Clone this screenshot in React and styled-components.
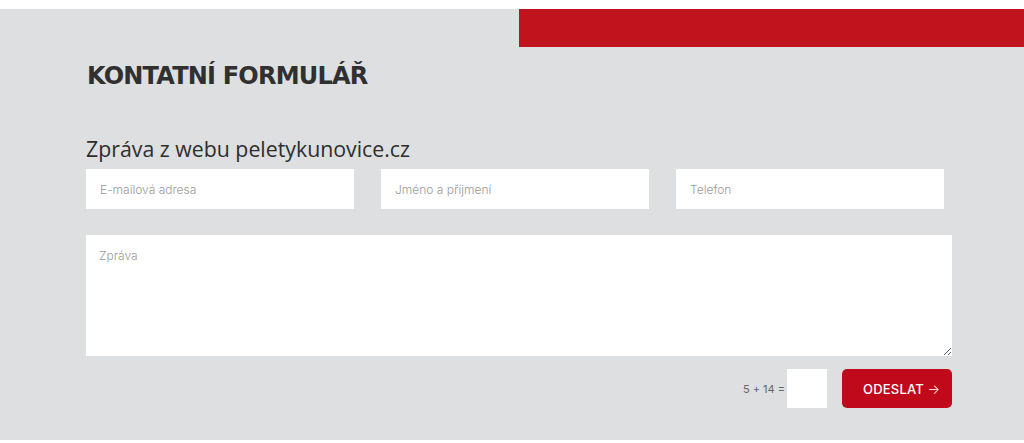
import React from "react";
import styled, { createGlobalStyle } from "styled-components";

const GlobalStyle = createGlobalStyle`
  html, body {
    margin: 0;
    padding: 0;
    background: #ffffff;
  }
  * {
    box-sizing: border-box;
  }
`;

const Section = styled.section`
  position: relative;
  margin-top: 9px;
  height: 431px;
  background: #dddfe0;
  padding: 51px 0 0 86px;
  font-family: "Open Sans", sans-serif;
`;

const RedBar = styled.div`
  position: absolute;
  top: 0;
  right: 0;
  width: 505px;
  height: 38px;
  background: #c1131d;
`;

const Title = styled.h2`
  margin: 0 0 0 1px;
  font-family: "DejaVu Sans", sans-serif;
  font-weight: 700;
  font-size: 24px;
  line-height: 32px;
  color: #303030;
  letter-spacing: -0.8px;
`;

const Subtitle = styled.h3`
  margin: 42px 0 0 0;
  font-family: "Open Sans", sans-serif;
  font-weight: 400;
  font-size: 21.3px;
  line-height: 30px;
  color: #2e2e2e;
`;

const Form = styled.form`
  margin-top: 5px;
  width: 866px;
  display: flex;
  flex-direction: column;
`;

const Row = styled.div`
  display: flex;
  gap: 27px;
`;

const Input = styled.input`
  width: 268px;
  height: 40px;
  border: none;
  background: #ffffff;
  padding: 0 14px;
  font-family: "Inter", "Open Sans", sans-serif;
  font-weight: 300;
  font-size: 12px;
  color: #333;
  outline: none;
  &::placeholder {
    color: #9a9a9a;
  }
`;

const TextArea = styled.textarea`
  margin-top: 26px;
  width: 866px;
  height: 121px;
  border: none;
  background: #ffffff;
  padding: 13px 13px;
  font-family: "Inter", "Open Sans", sans-serif;
  font-weight: 300;
  font-size: 12px;
  outline: none;
  &::placeholder {
    color: #9a9a9a;
  }
`;

const Footer = styled.div`
  margin-top: 13px;
  display: flex;
  justify-content: flex-end;
  align-items: center;
`;

const Captcha = styled.label`
  display: flex;
  align-items: center;
  gap: 2px;
  font-family: "Inter", "Open Sans", sans-serif;
  font-size: 11px;
  color: #666666;
`;

const CaptchaInput = styled.input`
  width: 40px;
  height: 39px;
  border: none;
  background: #ffffff;
  outline: none;
`;

const Button = styled.button`
  margin-left: 15px;
  width: 110px;
  height: 39px;
  border: none;
  border-radius: 5px;
  background: #c00a1b;
  color: #ffffff;
  padding: 0 0 0 21px;
  text-align: left;
  font-family: "Inter", "Open Sans", sans-serif;
  font-weight: 500;
  font-size: 13px;
  letter-spacing: 0.2px;
  cursor: pointer;
`;

const Arrow = styled.span`
  font-weight: 300;
`;

export default function App() {
  return (
    <>
      <GlobalStyle />
      <Section>
        <RedBar />
        <Title>KONTATNÍ FORMULÁŘ</Title>
        <Subtitle>Zpráva z webu peletykunovice.cz</Subtitle>
        <Form onSubmit={(e) => e.preventDefault()}>
          <Row>
            <Input type="email" placeholder="E-mailová adresa" />
            <Input type="text" placeholder="Jméno a příjmení" />
            <Input type="tel" placeholder="Telefon" />
          </Row>
          <TextArea placeholder="Zpráva" />
          <Footer>
            <Captcha>
              5 + 14 =
              <CaptchaInput type="text" />
            </Captcha>
            <Button type="submit">
              ODESLAT <Arrow>→</Arrow>
            </Button>
          </Footer>
        </Form>
      </Section>
    </>
  );
}
